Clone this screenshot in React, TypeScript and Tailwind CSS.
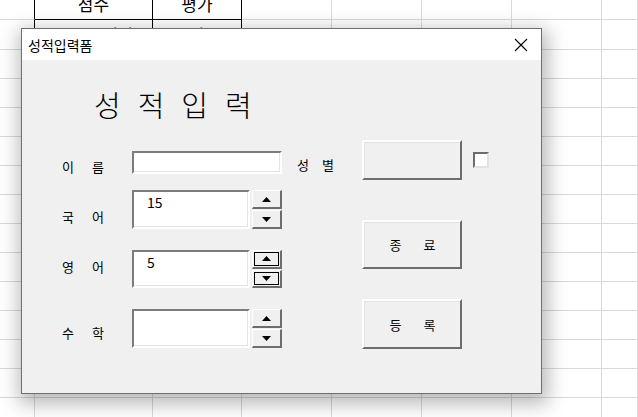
import React from 'react';

const colWidths = ['w-[35px]', 'w-[118px]', 'w-[89px]', 'w-[90px]', 'w-[90px]', 'w-[90px]', 'w-[90px]', 'flex-1'];

const sheetRows = [
  { h: 'h-[32px]', cells: ['', '점수', '평가'], table: true },
  { h: 'h-[30px]', cells: ['', '0 ~ 60 미만', '가'], table: true },
  { h: 'h-[29px]', cells: ['', '', ''], table: true },
  ...Array.from({ length: 12 }, () => ({ h: 'h-[29px]', cells: [] as string[], table: false })),
];

const Sheet = () => (
  <div className="-mt-[12px] flex flex-col">
    {sheetRows.map((row, r) => (
      <div key={r} className={`flex ${row.h}`}>
        {colWidths.map((w, c) => {
          const black = row.table && (c === 1 || c === 2);
          const blackRight = row.table && c <= 2;
          return (
            <div
              key={c}
              className={`${w} flex items-center justify-center border-r border-b text-[17px] text-black ${
                blackRight ? 'border-r-black' : 'border-r-[#d9d9d9]'
              } ${black ? 'border-b-black' : 'border-b-[#d9d9d9]'}`}
            >
              {row.cells[c] || ''}
            </div>
          );
        })}
      </div>
    ))}
  </div>
);

const Label = ({ text, mt, gap = 'tracking-[18px]' }: { text: string; mt: string; gap?: string }) => (
  <div className={`${mt} h-[16px] text-[13px] leading-[16px] whitespace-nowrap ${gap}`}>{text}</div>
);

const TextBox = ({ w, h, value }: { w: string; h: string; value?: string }) => (
  <div className={`${w} ${h} border-2 border-t-[#7c7c7c] border-l-[#7c7c7c] border-b-white border-r-white`}>
    <div className="h-full bg-white border-b border-r border-b-[#e3e3e3] border-r-[#e3e3e3] pl-[13px] text-[14px] leading-[20px]">
      {value}
    </div>
  </div>
);

const Arrow = ({ up }: { up?: boolean }) => (
  <svg width="9" height="5" viewBox="0 0 9 5">
    <polygon points={up ? '4.5,0 9,5 0,5' : '0,0 9,0 4.5,5'} fill="#000" />
  </svg>
);

const SpinButton = ({ up, focused }: { up?: boolean; focused?: boolean }) => (
  <div className="flex-1 border-t border-l border-r-2 border-b-2 border-t-white border-l-white border-r-[#6d6d6d] border-b-[#6d6d6d] bg-[#f0f0f0] p-[1px]">
    <div className={`h-full flex items-center justify-center ${focused ? 'border border-black' : ''}`}>
      <Arrow up={up} />
    </div>
  </div>
);

const Spin = ({ focused }: { focused?: boolean }) => (
  <div className="ml-[2px] w-[30px] h-full flex flex-col gap-[1px]">
    <SpinButton up focused={focused} />
    <SpinButton focused={focused} />
  </div>
);

const Button = ({ h, text, mt }: { h: string; text?: string[]; mt?: string }) => (
  <div
    className={`${mt || ''} w-[100px] ${h} border-2 border-t-white border-l-white border-r-[#6d6d6d] border-b-[#6d6d6d]`}
  >
    <div className="h-full border-t border-l border-t-[#e3e3e3] border-l-[#e3e3e3] flex items-center justify-center gap-[22px] text-[13px]">
      {text?.map((t) => (
        <span key={t}>{t}</span>
      ))}
    </div>
  </div>
);

const ScoreForm = () => (
  <div className="absolute left-[21px] top-[28px] w-[521px] h-[366px] border border-[#6f6f6f] bg-[#f0f0f0] shadow-[2px_6px_18px_4px_rgba(0,0,0,0.28)] flex flex-col">
    <div className="h-[31px] bg-white flex items-center justify-between pl-[6px] pr-[13px]">
      <span className="text-[14px] leading-none">성적입력폼</span>
      <svg width="14" height="14" viewBox="0 0 14 14">
        <path d="M1 1 L13 13 M13 1 L1 13" stroke="#000" strokeWidth="1.1" />
      </svg>
    </div>
    <div className="flex-1 flex flex-col">
      <div className="ml-[72px] mt-[22px] h-[44px] leading-[44px] text-[29px] font-light tracking-[17px]">성적입력</div>
      <div className="mt-[14px] flex">
        <div className="w-[340px] flex flex-col">
          <div className="mt-[11px] h-[23px] flex items-start">
            <div className="ml-[40px] w-[70px]">
              <Label text="이름" mt="mt-[8px]" />
            </div>
            <TextBox w="w-[150px]" h="h-[23px]" />
            <div className="ml-[15px]">
              <Label text="성별" mt="mt-[6px]" gap="tracking-[13px]" />
            </div>
          </div>
          <div className="mt-[16px] h-[39px] flex items-start">
            <div className="ml-[40px] w-[70px]">
              <Label text="국어" mt="mt-[19px]" />
            </div>
            <TextBox w="w-[118px]" h="h-[39px]" value="15" />
            <Spin />
          </div>
          <div className="mt-[21px] h-[38px] flex items-start">
            <div className="ml-[40px] w-[70px]">
              <Label text="영어" mt="mt-[9px]" />
            </div>
            <TextBox w="w-[118px]" h="h-[38px]" value="5" />
            <Spin focused />
          </div>
          <div className="mt-[21px] h-[39px] flex items-start">
            <div className="ml-[40px] w-[70px]">
              <Label text="수학" mt="mt-[16px]" />
            </div>
            <TextBox w="w-[118px]" h="h-[39px]" />
            <Spin />
          </div>
        </div>
        <div className="flex flex-col">
          <div className="flex items-start">
            <Button h="h-[40px]" />
            <div className="ml-[11px] mt-[12px] w-[16px] h-[16px] border-2 border-t-[#6d6d6d] border-l-[#6d6d6d] border-b-[#e3e3e3] border-r-[#e3e3e3] bg-white" />
          </div>
          <Button mt="mt-[40px]" h="h-[49px]" text={['종', '료']} />
          <Button mt="mt-[30px]" h="h-[50px]" text={['등', '록']} />
        </div>
      </div>
    </div>
  </div>
);

export default function App() {
  return (
    <div className="relative w-[638px] h-[417px] overflow-hidden bg-white text-black font-['Noto_Sans_CJK_KR','Noto_Sans',sans-serif]">
      <Sheet />
      <ScoreForm />
    </div>
  );
}
